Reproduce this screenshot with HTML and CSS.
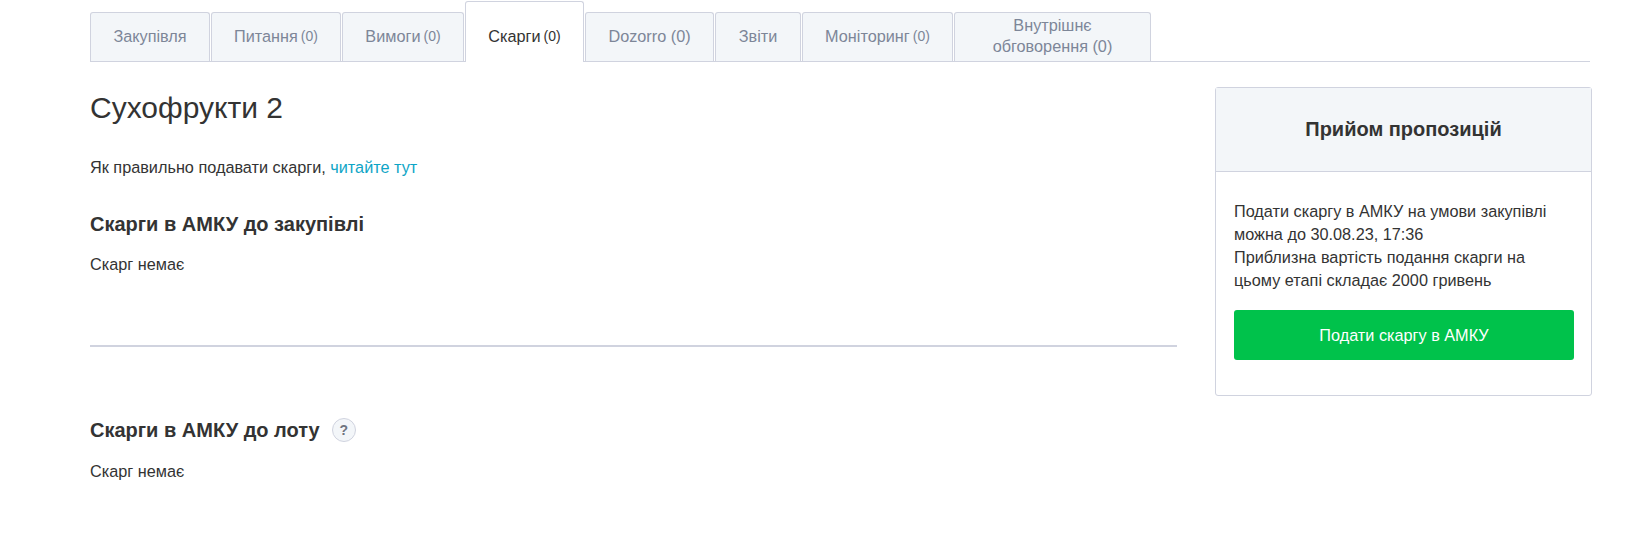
FILE: index.html
```html
<!DOCTYPE html>
<html lang="uk">
<head>
<meta charset="utf-8">
<title>Скарги</title>
<link rel="stylesheet" href="styles.css">
</head>
<body>
<div class="page">
  <nav class="tabs">
    <a class="tab w-1">Закупівля</a>
    <a class="tab w-2">Питання<span class="count">(0)</span></a>
    <a class="tab w-3">Вимоги<span class="count">(0)</span></a>
    <a class="tab active w-4">Скарги<span class="count">(0)</span></a>
    <a class="tab w-5">Dozorro (0)</a>
    <a class="tab w-6">Звіти</a>
    <a class="tab w-7">Моніторинг<span class="count">(0)</span></a>
    <a class="tab w-8">Внутрішнє<br>обговорення (0)</a>
  </nav>
  <div class="layout">
    <main class="main">
      <h1 class="title">Сухофрукти 2</h1>
      <p class="intro">Як правильно подавати скарги, <a class="link">читайте тут</a></p>
      <h2 class="heading">Скарги в АМКУ до закупівлі</h2>
      <p class="empty">Скарг немає</p>
      <hr class="divider">
      <h2 class="heading heading-lot">Скарги в АМКУ до лоту <span class="help">?</span></h2>
      <p class="empty">Скарг немає</p>
    </main>
    <aside class="card">
      <div class="card-head">Прийом пропозицій</div>
      <div class="card-body">
        <p class="card-text">Подати скаргу в АМКУ на умови закупівлі можна до 30.08.23, 17:36<br>Приблизна вартість подання скарги на цьому етапі складає 2000 гривень</p>
        <a class="button">Подати скаргу в АМКУ</a>
      </div>
    </aside>
  </div>
</div>
</body>
</html>
```

FILE: styles.css
```css
* { box-sizing: border-box; }
html, body { margin: 0; padding: 0; background: #fff; }
body {
  font-family: "Liberation Sans", Arial, sans-serif;
  font-size: 16.25px;
  line-height: 23px;
  color: #333;
}
.page { width: 1500px; margin-left: 90px; }

.tabs {
  display: flex;
  align-items: flex-end;
  gap: 1px;
  height: 62px;
  border-bottom: 1px solid #d0d3df;
}
.tab {
  display: flex;
  align-items: center;
  justify-content: center;
  height: 49px;
  padding-bottom: 2px;
  border: 1px solid #d0d3df;
  border-bottom: 0;
  border-radius: 3px 3px 0 0;
  background: #f3f6f9;
  color: #7d8698;
  text-align: center;
  line-height: 21px;
  white-space: nowrap;
}
.tab.w-1 { width: 120px; }
.tab.w-2 { width: 130px; }
.tab.w-3 { width: 122px; }
.tab.w-4 { width: 119px; }
.tab.w-5 { width: 129px; }
.tab.w-6 { width: 86px; }
.tab.w-7 { width: 151px; }
.tab.w-8 { width: 197px; }
.tab.active {
  height: 61px;
  padding-top: 12px;
  margin-bottom: -1px;
  padding-bottom: 3px;
  background: #fff;
  color: #333;
}
.count { font-size: 14px; margin-left: 3px; }

.layout { display: flex; align-items: flex-start; justify-content: space-between; width: 1502px; padding-top: 25px; }
.main { width: 1087px; }
.title { margin: 0; padding-top: 4px; font-size: 30px; line-height: 34px; font-weight: 400; }
.intro { margin: 0; padding-top: 31px; }
.link { color: #0ea5c6; }
.heading { margin: 0; padding-top: 32px; font-size: 20px; line-height: 26px; font-weight: 700; display: flex; align-items: center; }
.empty { margin: 0; padding-top: 16px; }
.divider { margin: 69px 0 0; border: 0; height: 2px; background: #d0d3df; }
.heading-lot { padding-top: 70px; padding-bottom: 1px; }
.help {
  display: inline-flex;
  align-items: center;
  justify-content: center;
  width: 24px;
  height: 24px;
  margin-left: 12px;
  border: 1px solid #d0d3df;
  border-radius: 50%;
  background: #f3f6f9;
  color: #6f7480;
  font-size: 14px;
  font-weight: 700;
}

.card { width: 377px; height: 309px; border: 1px solid #d0d3df; border-radius: 3px; }
.card-head {
  height: 84px;
  display: flex;
  align-items: center;
  justify-content: center;
  background: #f3f6f9;
  border-bottom: 1px solid #d0d3df;
  font-size: 20px;
  font-weight: 700;
}
.card-body { padding: 28px 17px 0 18px; }
.card-text { margin: 0; }
.button {
  display: flex;
  align-items: center;
  justify-content: center;
  height: 50px;
  margin-top: 18px;
  border-radius: 3px;
  background: #00c24b;
  color: #fff;
}
```
